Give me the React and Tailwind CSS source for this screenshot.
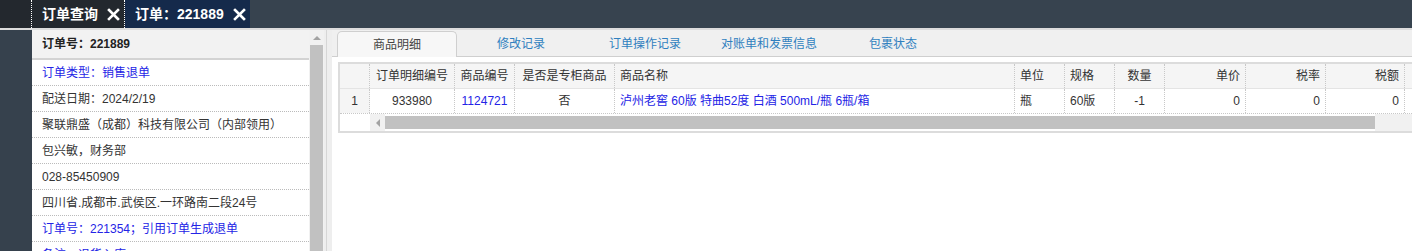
import React from "react";

const font = { fontFamily: '"Liberation Sans", "Noto Sans CJK SC", sans-serif' };

const infoRows = [
  { text: "订单类型：销售退单", blue: true },
  { text: "配送日期：2024/2/19" },
  { text: "聚联鼎盛（成都）科技有限公司（内部领用）" },
  { text: "包兴敏，财务部" },
  { text: "028-85450909" },
  { text: "四川省.成都市.武侯区.一环路南二段24号" },
  { text: "订单号：221354；引用订单生成退单", blue: true },
  { text: "备注：退货入库", blue: true },
];

const tabs = ["商品明细", "修改记录", "订单操作记录", "对账单和发票信息", "包裹状态"];

const cols = [
  { title: "", w: "w-[30px]", align: "text-center" },
  { title: "订单明细编号", w: "w-[85px]", align: "text-center" },
  { title: "商品编号", w: "w-[60px]", align: "text-center" },
  { title: "是否是专柜商品", w: "w-[100px]", align: "text-center" },
  { title: "商品名称", w: "w-[400px]", align: "text-left" },
  { title: "单位", w: "w-[50px]", align: "text-left" },
  { title: "规格", w: "w-[50px]", align: "text-left" },
  { title: "数量", w: "w-[50px]", align: "text-center" },
  { title: "单价", w: "w-[81px]", align: "text-right" },
  { title: "税率", w: "w-[80px]", align: "text-right" },
  { title: "税额", w: "w-[79px]", align: "text-right" },
];

const row = [
  { v: "1" },
  { v: "933980" },
  { v: "1124721", blue: true },
  { v: "否" },
  { v: "泸州老窖 60版 特曲52度 白酒 500mL/瓶 6瓶/箱", blue: true },
  { v: "瓶" },
  { v: "60版" },
  { v: "-1" },
  { v: "0" },
  { v: "0" },
  { v: "0" },
];

const CloseX = () => (
  <svg width="13" height="13" viewBox="0 0 13 13" className="ml-[9px]">
    <path d="M2 2 L11 11 M11 2 L2 11" stroke="#fff" strokeWidth="2.6" strokeLinecap="square" />
  </svg>
);

export default function App() {
  return (
    <div className="w-[1412px] h-[251px] overflow-hidden flex flex-col bg-white text-[#333]" style={font}>
      {/* top tab bar */}
      <div className="h-[28px] flex bg-[#37434f] shrink-0">
        <div className="w-[32px] bg-[#23282e] border-r border-dotted border-white" />
        <div className="w-[93px] bg-[#23282e] border-r border-dotted border-white flex items-center pl-[10px] text-white text-[14px] font-bold">
          订单查询
          <CloseX />
        </div>
        <div className="w-[125px] bg-[#152a4b] flex items-center pl-[10px] text-white text-[14px] font-bold">
          订单：221889
          <CloseX />
        </div>
      </div>
      <div className="h-[2px] bg-[#dcdcdc] shrink-0" />

      <div className="flex flex-1 min-h-0">
        <div className="w-[32px] bg-[#36414d]" />

        {/* left info panel */}
        <div className="w-[277px] flex flex-col text-[12px] overflow-hidden">
          <div className="h-[30px] shrink-0 bg-[#f2f2f2] border-b-2 border-[#d3d3d3] flex items-center pl-[10px] font-bold text-[#222]">
            订单号：221889
          </div>
          {infoRows.map((r, i) => (
            <div
              key={i}
              className={`h-[26px] shrink-0 border-b border-dotted border-[#bbb] flex items-center pl-[10px] ${
                r.blue ? "text-[#2424e6]" : "text-[#333]"
              }`}
            >
              {r.text}
            </div>
          ))}
        </div>

        {/* scrollbar */}
        <div className="w-[15px] bg-[#f1f1f1] flex flex-col items-center">
          <div className="h-[15px] flex items-center justify-center">
            <div className="w-0 h-0 border-l-[4px] border-r-[4px] border-b-[4px] border-l-transparent border-r-transparent border-b-[#a3a3a3]" />
          </div>
          <div className="w-[13px] flex-1 bg-[#c1c1c1]" />
        </div>

        {/* splitter */}
        <div className="w-[8px] flex bg-[#eeeeee]">
          <div className="w-[2px]" />
          <div className="w-px bg-[#d6d6d6]" />
        </div>

        {/* right panel */}
        <div className="flex-1 min-w-0 flex flex-col">
          <div className="h-[27px] bg-[#f0f0f0] border-b border-[#cfcfcf] flex items-end pl-[5px] shrink-0">
            {tabs.map((t, i) => (
              <div
                key={t}
                className={`w-[120px] h-[25px] mr-[4px] flex items-center justify-center text-[12px] ${
                  i === 0
                    ? "bg-[#f7f7f7] border border-b-0 border-[#cfcfcf] rounded-t-[5px] text-[#444] -mb-px h-[26px]"
                    : "text-[#2f7fbf]"
                }`}
              >
                {t}
              </div>
            ))}
          </div>

          <div className="ml-[6px] mt-[5px] border-2 border-r-0 border-[#dcdcdc] overflow-hidden text-[12px]">
            <div className="w-[1100px]">
              <div className="flex h-[25px] bg-[#f5f5f5] border-b border-[#e4e4e4]">
                {cols.map((c, i) => (
                  <div
                    key={i}
                    className={`${c.w} shrink-0 border-r border-dotted border-[#c8c8c8] flex items-center px-[5px] ${c.align} text-[#333]`}
                  >
                    <span className="w-full">{c.title}</span>
                  </div>
                ))}
                <div className="flex-1" />
              </div>
              <div className="flex h-[25px] border-b border-dotted border-[#c8c8c8]">
                {row.map((c, i) => (
                  <div
                    key={i}
                    className={`${cols[i].w} shrink-0 border-r border-dotted border-[#c8c8c8] flex items-center px-[5px] ${cols[i].align} ${
                      i === 0 ? "bg-[#f5f5f5]" : ""
                    } ${c.blue ? "text-[#2424e6]" : "text-[#333]"}`}
                  >
                    <span className="w-full">{c.v}</span>
                  </div>
                ))}
              </div>
              <div className="flex h-[17px] bg-white">
                <div className="w-[30px] shrink-0" />
                <div className="w-[15px] shrink-0 bg-[#f1f1f1] flex items-center justify-center">
                  <div className="w-0 h-0 border-t-[4px] border-b-[4px] border-r-[4px] border-t-transparent border-b-transparent border-r-[#a3a3a3]" />
                </div>
                <div className="w-[990px] shrink-0 bg-[#c1c1c1] my-[2px]" />
                <div className="flex-1 bg-[#f1f1f1]" />
              </div>
            </div>
          </div>
        </div>
      </div>
    </div>
  );
}
